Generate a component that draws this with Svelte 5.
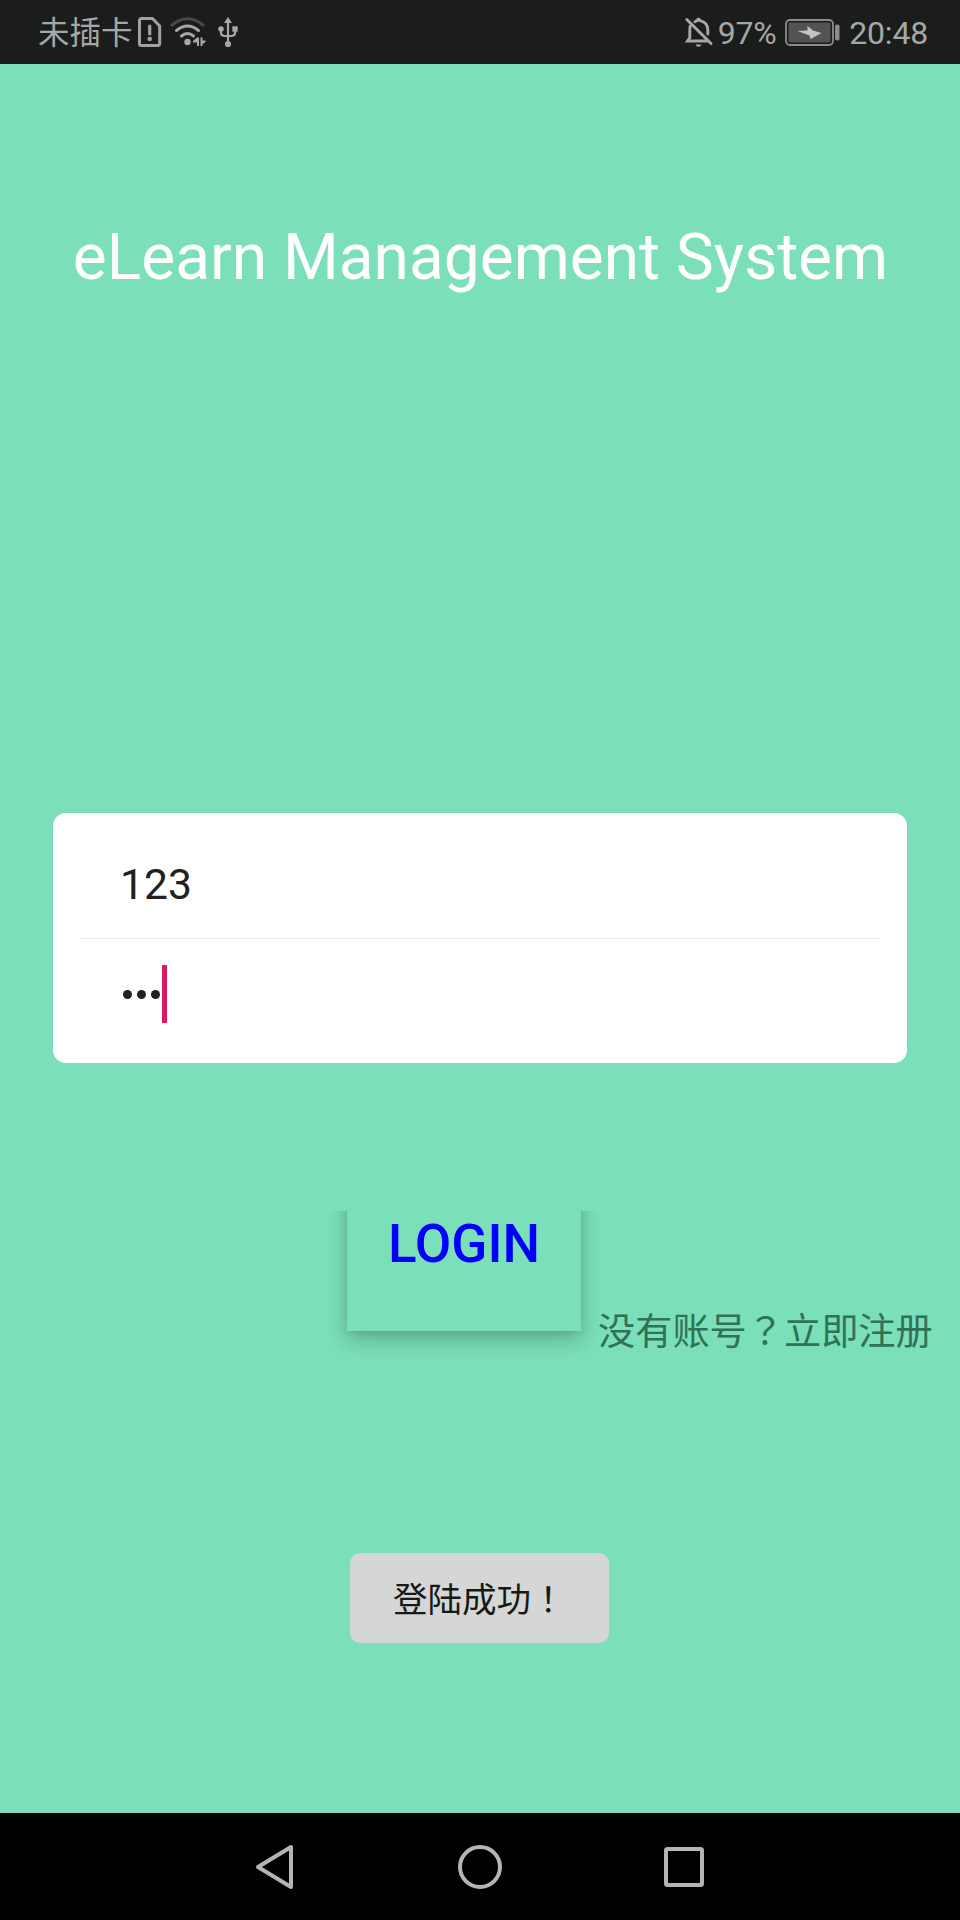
<script>
  let username = '123';
  let password = [0, 1, 2];
</script>

<div class="screen">
  <header class="status">
    <div class="left">
      <span class="carrier">未插卡</span>
      <svg class="sim" width="24" height="30" viewBox="0 0 24 30">
        <path d="M3.500 1.500H14.500L21.700 9V26.500a2 2 0 0 1-2 2H3.500a2 2 0 0 1-2-2V3.500a2 2 0 0 1 2-2Z" fill="none" stroke="#a0a2a1" stroke-width="3" stroke-linejoin="round" />
        <path d="M11.700 9v8" stroke="#a0a2a1" stroke-width="3.200" stroke-linecap="round" />
        <circle cx="11.700" cy="22" r="2.300" fill="#a0a2a1" />
      </svg>
      <svg class="wifi" width="36" height="30" viewBox="0 0 36 30" fill="none" stroke-width="3" stroke-linecap="round">
        <path d="M2 8Q17.500-4.500 33 8" stroke="#484a49" />
        <path d="M6.500 13.500Q17.500 4.500 28.500 13.500" stroke="#a6a8a7" />
        <path d="M11.500 19Q17.500 14 23.500 19" stroke="#a6a8a7" />
        <circle cx="17.500" cy="25" r="3.200" fill="#a6a8a7" />
        <path d="M27 20.500h2V29h-2v-3.500h-4V24ZM30.500 20.500h2V23.500h3v1.500l-3 2V29h-2Z" fill="#a6a8a7" />
      </svg>
      <svg class="usb" width="20" height="31" viewBox="0 0 20 31" fill="none" stroke="#a6a8a7" stroke-width="2.200">
        <path d="M10 4v20M3 12v3.500q0 3.500 4 3.500h6q4 0 4-3.500v-3.500" />
        <path d="M10 0l4 6H6Z" fill="#a6a8a7" stroke="none" />
        <circle cx="3" cy="12" r="2.800" fill="#a6a8a7" stroke="none" />
        <path d="M14.300 9.300h5.400v5.400h-5.400Z" fill="#a6a8a7" stroke="none" />
        <circle cx="10" cy="27" r="3.100" fill="#a6a8a7" stroke="none" />
      </svg>
    </div>
    <div class="right">
      <svg class="bell" width="28" height="30" viewBox="0 0 28 30" fill="none" stroke="#a6a8a7" stroke-width="2.900" stroke-linecap="round">
        <path d="M1.800 2.500L26 26.500" />
        <path d="M5.300 9Q4.800 10.500 4.800 13v7.500L2.500 24H22M10 4.800Q11 4 12 3.700Q13.500 0 15 3.700Q22.800 5.500 22.800 13v4" />
        <path d="M10.500 27.500h6q-.5 2.300-3 2.300t-3-2.300Z" fill="#a6a8a7" stroke="none" />
      </svg>
      <span class="percent">97%</span>
      <svg class="battery" width="55" height="27" viewBox="0 0 55 27">
        <rect x="1" y="1" width="47" height="25" rx="4" fill="none" stroke="#8b8d8c" stroke-width="1.800" />
        <rect x="3.500" y="3.500" width="42" height="20" rx="1.500" fill="#525453" />
        <path d="M12.500 12L22.500 11.500 22.500 7 28 11.500 36.500 14 25.500 20 24.500 16.500Z" fill="#c3c5c4" />
        <rect x="50" y="5.500" width="4.500" height="16" rx="1.800" fill="#8b8d8c" />
      </svg>
      <span class="clock">20:48</span>
    </div>
  </header>

  <main>
    <h1>eLearn Management System</h1>

    <section class="card">
      <div class="field">{username}</div>
      <div class="field password">
        {#each password as key (key)}<i class="dot"></i>{/each}
        <b class="caret"></b>
      </div>
    </section>

    <div class="actions">
      <div class="clip"><button>LOGIN</button></div>
      <a class="register" href="#register">没有账号<span class="mark" lang="zh-TW">？</span>立即注册</a>
    </div>

    <div class="toast">登陆成功<span class="mark" lang="zh-TW">！</span></div>
  </main>

  <nav>
    <svg class="back" width="40" height="46" viewBox="0 0 40 46"><path d="M36 3V43L3 23Z" /></svg>
    <svg width="46" height="46" viewBox="0 0 46 46"><circle cx="23" cy="23" r="20" /></svg>
    <svg width="42" height="42" viewBox="0 0 42 42"><rect x="3" y="3" width="36" height="36" rx="1.500" /></svg>
  </nav>
</div>

<style>
  :global(body) {
    margin: 0;
  }
  .screen {
    width: 960px;
    height: 1920px;
    display: flex;
    flex-direction: column;
    overflow: hidden;
    background: #7bdfb9;
    font-family: Roboto, 'Noto Sans CJK SC', sans-serif;
  }
  .mark {
    font-family: 'Noto Sans CJK TC', sans-serif;
  }
  .status {
    box-sizing: border-box;
    height: 64px;
    padding: 0 32px 0 38px;
    display: flex;
    justify-content: space-between;
    align-items: center;
    background: #1b1d1c;
    color: #a6a8a7;
    font-size: 32px;
    line-height: 64px;
    white-space: nowrap;
  }
  .left,
  .right {
    display: flex;
    align-items: center;
  }
  .carrier {
    width: 96px;
    padding-top: 4px;
    font-size: 31.500px;
  }
  .sim {
    margin-left: 4px;
  }
  .wifi {
    margin-left: 8px;
  }
  .usb {
    margin-left: 12px;
  }
  .bell {
    margin-right: 5px;
  }
  .battery {
    margin: 0 9px 0 9px;
  }
  .percent,
  .clock {
    padding-top: 2px;
  }
  .percent {
    letter-spacing: -0.3px;
  }
  .clock {
    letter-spacing: -0.2px;
  }
  main {
    flex: 1;
    display: flex;
    flex-direction: column;
    padding-top: 156px;
  }
  h1 {
    margin: 0;
    height: 76px;
    padding-left: 1px;
    line-height: 76px;
    font-size: 64px;
    font-weight: 400;
    color: #fff;
    text-align: center;
    white-space: nowrap;
  }
  .card {
    box-sizing: border-box;
    width: 854px;
    height: 250px;
    margin: 517px 53px 0;
    padding: 0 27px;
    border-radius: 13px;
    background: #fff;
  }
  .field {
    box-sizing: border-box;
    height: 126px;
    padding: 9px 40px 0;
    border-bottom: 1px solid #ebebeb;
    font-size: 42.67px;
    line-height: 125px;
    color: #212121;
  }
  .password {
    height: 124px;
    padding: 0 42.500px 14px;
    border: 0;
    display: flex;
    align-items: center;
  }
  .dot {
    width: 9px;
    height: 9px;
    margin-right: 5.300px;
    border-radius: 50%;
    background: #212121;
  }
  .caret {
    width: 5px;
    height: 58px;
    margin-left: -3.500px;
    background: #d81b60;
  }
  .actions {
    display: flex;
    height: 144px;
    margin-top: 148px;
    padding-left: 347px;
  }
  .clip {
    width: 234px;
    height: 120px;
    clip-path: inset(0 -60px -60px);
  }
  button {
    display: block;
    width: 234px;
    height: 184px;
    margin: -64px 0 0;
    padding: 10px 0 0;
    border: 0;
    background: #7bdfb9;
    box-shadow: 0 9px 20px rgba(0, 0, 0, 0.22), 0 2px 8px rgba(0, 0, 0, 0.08);
    color: #00f;
    font: 500 53px/60px Roboto, sans-serif;
  }
  .register {
    align-self: flex-end;
    margin-left: 17px;
    font-size: 37.2px;
    line-height: 45px;
    color: #2f7257;
    text-decoration: none;
    white-space: nowrap;
  }
  .toast {
    align-self: center;
    box-sizing: border-box;
    width: 259px;
    height: 90px;
    margin-top: 198px;
    margin-right: 1px;
    padding-left: 43px;
    border-radius: 10px;
    background: #d4d7d6;
    color: #161918;
    font-size: 34.5px;
    line-height: 89px;
    white-space: nowrap;
  }
  nav {
    height: 107px;
    display: flex;
    align-items: center;
    justify-content: center;
    gap: 160px;
    background: #000;
  }
  nav svg {
    fill: none;
    stroke: #b5b5b5;
    stroke-width: 4;
    stroke-linejoin: round;
  }
  .back {
    margin-right: 2px;
  }
</style>
